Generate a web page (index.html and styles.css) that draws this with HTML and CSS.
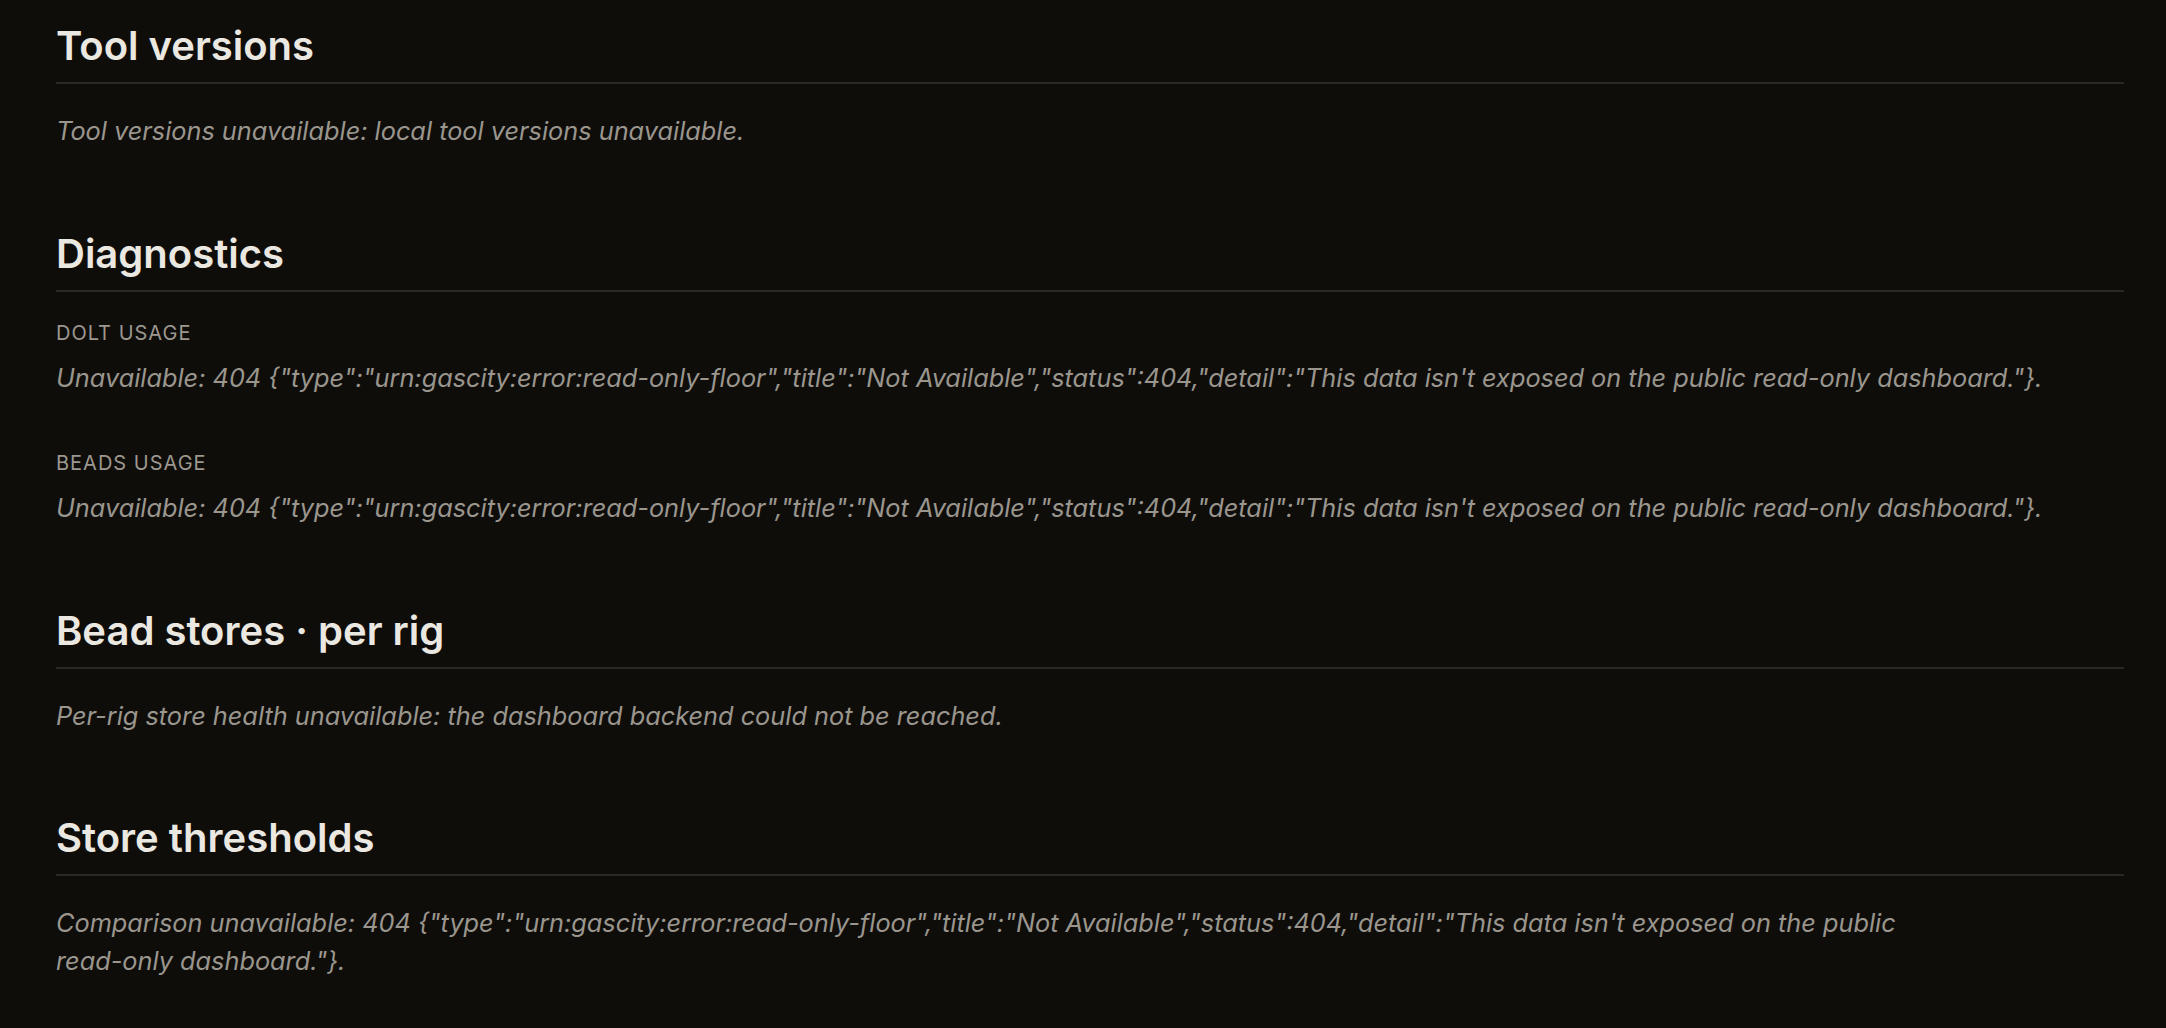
FILE: index.html
```html
<!DOCTYPE html>
<html lang="en">
<head>
<meta charset="utf-8">
<title>Dashboard status</title>
<link rel="stylesheet" href="styles.css">
</head>
<body>
<main class="page">
  <section class="panel">
    <h2 class="panel-title">Tool versions</h2>
    <p class="note">Tool versions unavailable: local tool versions unavailable.</p>
  </section>

  <section class="panel">
    <h2 class="panel-title">Diagnostics</h2>
    <div class="metric">
      <div class="metric-label">Dolt usage</div>
      <p class="note note-tight">Unavailable: 404 {"type":"urn:gascity:error:read-only-floor","title":"Not Available","status":404,"detail":"This data isn't exposed on the public read-only dashboard."}.</p>
    </div>
    <div class="metric">
      <div class="metric-label">Beads usage</div>
      <p class="note note-tight">Unavailable: 404 {"type":"urn:gascity:error:read-only-floor","title":"Not Available","status":404,"detail":"This data isn't exposed on the public read-only dashboard."}.</p>
    </div>
  </section>

  <section class="panel">
    <h2 class="panel-title">Bead stores · per rig</h2>
    <p class="note">Per-rig store health unavailable: the dashboard backend could not be reached.</p>
  </section>

  <section class="panel">
    <h2 class="panel-title">Store thresholds</h2>
    <p class="note note-narrow">Comparison unavailable: 404 {"type":"urn:gascity:error:read-only-floor","title":"Not Available","status":404,"detail":"This data isn't exposed on the public read-only dashboard."}.</p>
  </section>
</main>
</body>
</html>
```

FILE: styles.css
```css
html, body {
  margin: 0;
  padding: 0;
  background: #0f0d0a;
}

body {
  font-family: Inter, "Noto Sans", "Liberation Sans", sans-serif;
  color: #ebe8e2;
}

.page {
  display: flex;
  flex-direction: column;
  gap: 80px;
  padding: 22px 42px 40px 56px;
}

.panel {
  display: flex;
  flex-direction: column;
}

.panel-title {
  margin: 0;
  font-size: 40px;
  line-height: 48px;
  font-weight: 600;
  letter-spacing: 0;
  color: #ebe8e2;
  padding-bottom: 12px;
  border-bottom: 2px solid #2b2925;
}

.note {
  margin: 28px 0 0;
  font-size: 25.3px;
  line-height: 37.5px;
  font-style: italic;
  color: #9a968e;
}

.note-tight {
  margin-top: 12px;
}

.note-narrow {
  max-width: 1890px;
}

.metric {
  display: flex;
  flex-direction: column;
  margin-top: 54px;
}

.metric:first-of-type {
  margin-top: 28px;
}

.metric-label {
  font-size: 20px;
  line-height: 27px;
  letter-spacing: 0.05em;
  text-transform: uppercase;
  color: #9c978f;
}
```
